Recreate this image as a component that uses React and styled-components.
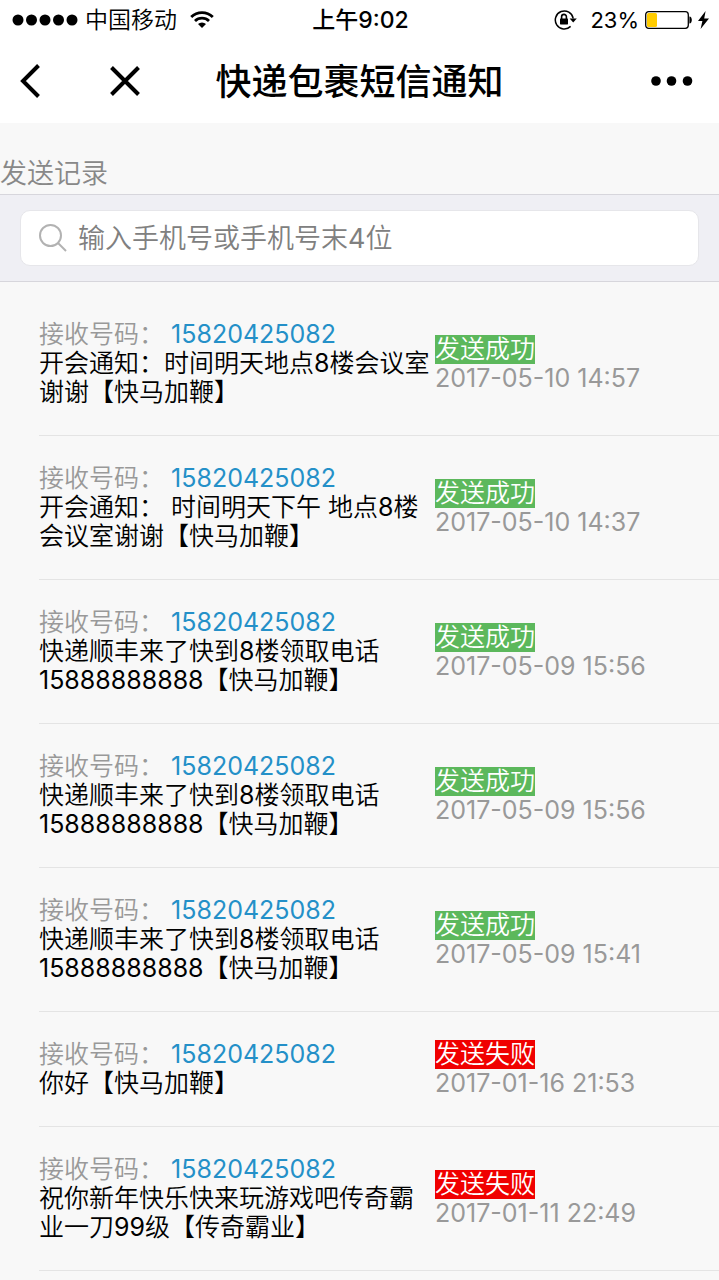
import styled, { createGlobalStyle } from 'styled-components';

const records = [
  { id: 1, phone: '15820425082', text: '开会通知：时间明天地点8楼会议室谢谢【快马加鞭】', ok: true, time: '2017-05-10 14:57' },
  { id: 2, phone: '15820425082', text: '开会通知： 时间明天下午 地点8楼会议室谢谢【快马加鞭】', ok: true, time: '2017-05-10 14:37' },
  { id: 3, phone: '15820425082', text: '快递顺丰来了快到8楼领取电话15888888888【快马加鞭】', ok: true, time: '2017-05-09 15:56' },
  { id: 4, phone: '15820425082', text: '快递顺丰来了快到8楼领取电话15888888888【快马加鞭】', ok: true, time: '2017-05-09 15:56' },
  { id: 5, phone: '15820425082', text: '快递顺丰来了快到8楼领取电话15888888888【快马加鞭】', ok: true, time: '2017-05-09 15:41' },
  { id: 6, phone: '15820425082', text: '你好【快马加鞭】', ok: false, time: '2017-01-16 21:53' },
  { id: 7, phone: '15820425082', text: '祝你新年快乐快来玩游戏吧传奇霸业一刀99级【传奇霸业】', ok: false, time: '2017-01-11 22:49' },
];

function App() {
  return (
    <Page>
      <GlobalStyle />
      <StatusBar>
        <StatusLeft>
          <Signal width="66" height="12" viewBox="0 0 66 12">
            <circle cx="6" cy="6" r="5.5" />
            <circle cx="19.5" cy="6" r="5.5" />
            <circle cx="33" cy="6" r="5.5" />
            <circle cx="46.5" cy="6" r="5.5" />
            <circle cx="60" cy="6" r="5.5" />
          </Signal>
          <Carrier>中国移动</Carrier>
          <svg width="24" height="18" viewBox="0 0 24 18" fill="none" stroke="#000" strokeWidth="2.8">
            <path d="M1.2 6a15.4 15.4 0 0 1 21.6 0" />
            <path d="M5 10a10 10 0 0 1 14 0" />
            <path d="M8 13.1a5.8 5.8 0 0 1 8 0L12 17z" fill="#000" stroke="none" />
          </svg>
        </StatusLeft>
        <Clock>上午9:02</Clock>
        <StatusRight>
          <svg width="23" height="20" viewBox="0 0 23 20">
            <path d="M19.2 8.5A9 9 0 1 0 16.6 16.4" fill="none" stroke="#000" strokeWidth="1.5" />
            <path d="M15.6 8.6h7.2l-3.6 4z" />
            <rect x="6" y="8.6" width="8" height="5.8" rx="0.6" />
            <path d="M7.6 9V6.8a2.4 2.4 0 0 1 4.8 0V9" fill="none" stroke="#000" strokeWidth="1.6" />
          </svg>
          <Percent>23%</Percent>
          <svg width="47" height="18" viewBox="0 0 47 18">
            <rect x="0.7" y="0.7" width="42.6" height="16.6" rx="3" fill="#fff" stroke="#000" strokeWidth="1.3" />
            <rect x="2" y="2" width="10" height="14" rx="1.5" fill="#fc0" />
            <path d="M44.4 5.5c3.2 0 3.2 7 0 7z" />
          </svg>
          <Bolt width="11" height="18" viewBox="0 0 11 18">
            <path d="M7.6 0L0 10h4.4L2.6 18 11 7.4H6.2z" />
          </Bolt>
        </StatusRight>
      </StatusBar>

      <NavBar>
        <NavLeft>
          <NavButton aria-label="返回">
            <svg width="20" height="34" viewBox="0 0 20 34" fill="none" stroke="#000" strokeWidth="4">
              <path d="M18.5 1.5L3 17l15.5 15.5" />
            </svg>
          </NavButton>
          <NavButton aria-label="关闭">
            <svg width="30" height="30" viewBox="0 0 30 30" fill="none" stroke="#000" strokeWidth="4">
              <path d="M1.5 1.5l27 27M28.5 1.5l-27 27" />
            </svg>
          </NavButton>
        </NavLeft>
        <Title>快递包裹短信通知</Title>
        <NavRight>
          <NavButton aria-label="更多">
            <svg width="42" height="10" viewBox="0 0 42 10">
              <circle cx="5" cy="5" r="4.8" />
              <circle cx="20.5" cy="5" r="4.8" />
              <circle cx="36.5" cy="5" r="4.8" />
            </svg>
          </NavButton>
        </NavRight>
      </NavBar>

      <SectionTitle>发送记录</SectionTitle>

      <SearchBar>
        <SearchBox>
          <svg width="28" height="28" viewBox="0 0 28 28" fill="none" stroke="#b2b2b2" strokeWidth="2">
            <circle cx="11.5" cy="11.5" r="10.5" />
            <path d="M19 19l8 8" />
          </svg>
          <SearchInput type="search" aria-label="搜索" placeholder="输入手机号或手机号末4位" />
        </SearchBox>
      </SearchBar>

      <List>
        {records.map((item) => (
          <Row key={item.id}>
            <Message>
              <Label>接收号码：</Label> <Phone href={`tel:${item.phone}`}>{item.phone}</Phone>
              <Text>{item.text}</Text>
            </Message>
            <Result>
              <Status $ok={item.ok}>{item.ok ? '发送成功' : '发送失败'}</Status>
              <Time>{item.time}</Time>
            </Result>
          </Row>
        ))}
      </List>
    </Page>
  );
}

const GlobalStyle = createGlobalStyle`
  * {
    box-sizing: border-box;
  }
  body {
    margin: 0;
    background: #f8f8f8;
    font-family: Inter, "Noto Sans CJK SC DemiLight", "Noto Sans CJK SC", sans-serif;
  }
`

const Page = styled.div`
  min-height: 100vh;
  background: #f8f8f8;
  color: #000;
`

const StatusBar = styled.div`
  display: grid;
  grid-template-columns: 1fr auto 1fr;
  align-items: center;
  height: 40px;
  padding: 0 10px 0 12px;
  background: #fff;
  font-size: 23px;
  line-height: 40px;
`

const StatusLeft = styled.div`
  display: flex;
  align-items: center;
`

const StatusRight = styled.div`
  display: flex;
  align-items: center;
  justify-content: flex-end;
`

const Signal = styled.svg`
  margin-right: 7px;
`

const Carrier = styled.span`
  margin-right: 13px;
`

const Clock = styled.span`
  font-family: Inter, "Noto Sans CJK SC", sans-serif;
  font-weight: 500;
`

const Percent = styled.span`
  margin: 0 6px 0 13px;
  font-size: 22px;
`

const Bolt = styled.svg`
  margin-left: 6px;
`

const NavBar = styled.header`
  display: grid;
  grid-template-columns: 1fr auto 1fr;
  align-items: center;
  height: 83px;
  padding: 0 20px 2px;
  background: #fff;
`

const NavLeft = styled.div`
  display: flex;
  align-items: center;
  gap: 70px;
`

const NavRight = styled.div`
  display: flex;
  justify-content: flex-end;
  padding-right: 6px;
`

const NavButton = styled.button`
  display: flex;
  padding: 0;
  border: none;
  background: none;
  cursor: pointer;
`

const Title = styled.h1`
  margin: 0;
  padding-top: 2px;
  font-family: Inter, "Noto Sans CJK SC", sans-serif;
  font-size: 36px;
  font-weight: 500;
  line-height: 52px;
`

const SectionTitle = styled.h2`
  margin: 0;
  padding: 32px 0 1px;
  font-size: 27px;
  font-weight: 350;
  line-height: 38px;
  color: #888;
`

const SearchBar = styled.div`
  padding: 15px 20px;
  background: #efeff4;
  border-top: 1px solid #d7d6dc;
  border-bottom: 1px solid #d7d6dc;
`

const SearchBox = styled.label`
  display: flex;
  align-items: center;
  gap: 11px;
  height: 56px;
  padding: 0 18px;
  border: 1px solid #e6e6ea;
  border-radius: 10px;
  background: #fff;
`

const SearchInput = styled.input`
  flex: 1;
  min-width: 0;
  padding: 2px 0 0;
  border: none;
  outline: none;
  background: none;
  font-family: inherit;
  font-size: 27px;
  line-height: 40px;

  &::placeholder {
    color: #808080;
    opacity: 1;
  }
`

const List = styled.ul`
  margin: 0;
  padding: 10px 0 0 39px;
  list-style: none;
`

const Row = styled.li`
  display: flex;
  align-items: center;
  padding: 28px 20px 28px 0;
  border-bottom: 1px solid #e4e4e4;
  font-size: 25px;
  line-height: 29px;
`

const Message = styled.div`
  width: 60%;
`

const Label = styled.span`
  color: #999;
`

const Phone = styled.a`
  color: #2490c8;
  text-decoration: none;
`

const Text = styled.div`
  color: #000;
`

const Result = styled.div`
  width: 40%;
`

const Status = styled.span`
  display: table;
  background: ${(props) => (props.$ok ? '#5cb85c' : '#f00000')};
  color: #fff;
`

const Time = styled.div`
  color: #999;
`

export default App;
